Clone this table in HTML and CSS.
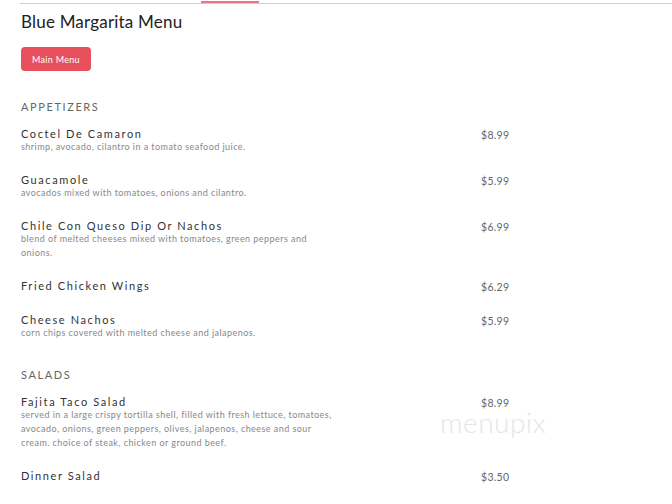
FILE: index.html
```html
<!DOCTYPE html>
<html>
    <head>
        <title>Blue Margarita Menu</title>
        <link rel="stylesheet" href="styles.css">
    </head>
    <body>
        <div class="topbar">
            <div class="tab-active"></div>
        </div>

        <div class="page">
            <h1>Blue Margarita Menu</h1>
            <button class="menu-btn">Main Menu</button>

            <div class="section">
                <h2>APPETIZERS</h2>
                <div class="item">
                    <div class="info">
                        <div class="name">Coctel De Camaron</div>
                        <div class="desc">shrimp, avocado, cilantro in a tomato seafood juice.</div>
                    </div>
                    <div class="price">$8.99</div>
                </div>
                <div class="item">
                    <div class="info">
                        <div class="name">Guacamole</div>
                        <div class="desc">avocados mixed with tomatoes, onions and cilantro.</div>
                    </div>
                    <div class="price">$5.99</div>
                </div>
                <div class="item">
                    <div class="info">
                        <div class="name">Chile Con Queso Dip Or Nachos</div>
                        <div class="desc">blend of melted cheeses mixed with tomatoes, green peppers and onions.</div>
                    </div>
                    <div class="price">$6.99</div>
                </div>
                <div class="item">
                    <div class="info">
                        <div class="name">Fried Chicken Wings</div>
                    </div>
                    <div class="price">$6.29</div>
                </div>
                <div class="item">
                    <div class="info">
                        <div class="name">Cheese Nachos</div>
                        <div class="desc">corn chips covered with melted cheese and jalapenos.</div>
                    </div>
                    <div class="price">$5.99</div>
                </div>
            </div>

            <div class="section">
                <h2>SALADS</h2>
                <div class="item">
                    <div class="info">
                        <div class="name">Fajita Taco Salad</div>
                        <div class="desc">served in a large crispy tortilla shell, filled with fresh lettuce, tomatoes, avocado, onions, green peppers, olives, jalapenos, cheese and sour cream. choice of steak, chicken or ground beef.</div>
                    </div>
                    <div class="price">$8.99</div>
                </div>
                <div class="item">
                    <div class="info">
                        <div class="name">Dinner Salad</div>
                    </div>
                    <div class="price">$3.50</div>
                </div>
            </div>
        </div>

        <div class="watermark">menupix</div>
    </body>
</html>
```

FILE: styles.css
```css
body {
    font-family: Lato, "Open Sans", sans-serif;
    margin: 0;
    padding: 0;
    color: #333;
    background: #fff;
    position: relative;
}

.topbar {
    margin-left: 20px;
    padding-top: 1px;
    border-bottom: 1px solid #d0d0d0;
    height: 2px;
}

.tab-active {
    margin-left: 181px;
    width: 58px;
    height: 2px;
    background: #e4758a;
}

.page {
    padding: 0 21px;
}

h1 {
    margin: 7px 0 0;
    font-size: 17px;
    font-weight: normal;
    letter-spacing: 0.2px;
    line-height: 22px;
    color: #222;
}

.menu-btn {
    margin-top: 14px;
    padding: 0 11px;
    height: 24px;
    border: none;
    border-radius: 4px;
    background: #e8505e;
    color: #fff;
    font-family: inherit;
    font-size: 9px;
    letter-spacing: 0.3px;
}

.section {
    margin-top: 29px;
}

.section + .section {
    margin-top: 9px;
}

h2 {
    margin: 0 0 13px;
    font-size: 11px;
    font-weight: normal;
    letter-spacing: 1.6px;
    line-height: 14px;
    color: #666;
}

.item {
    display: grid;
    grid-template-columns: 460px 1fr;
    padding-bottom: 19px;
}

.name {
    font-size: 11px;
    letter-spacing: 1.6px;
    line-height: 13px;
    color: #333;
}

.desc {
    max-width: 318px;
    font-size: 9px;
    letter-spacing: 0.45px;
    line-height: 14px;
    color: #888;
}

.price {
    padding-top: 2px;
    font-size: 10.5px;
    letter-spacing: 0.3px;
    line-height: 13px;
    color: #666;
}

.watermark {
    position: absolute;
    left: 440px;
    top: 412px;
    font-size: 28px;
    font-weight: 300;
    line-height: 20px;
    letter-spacing: 0.5px;
    color: #e6e6e6;
}
```
